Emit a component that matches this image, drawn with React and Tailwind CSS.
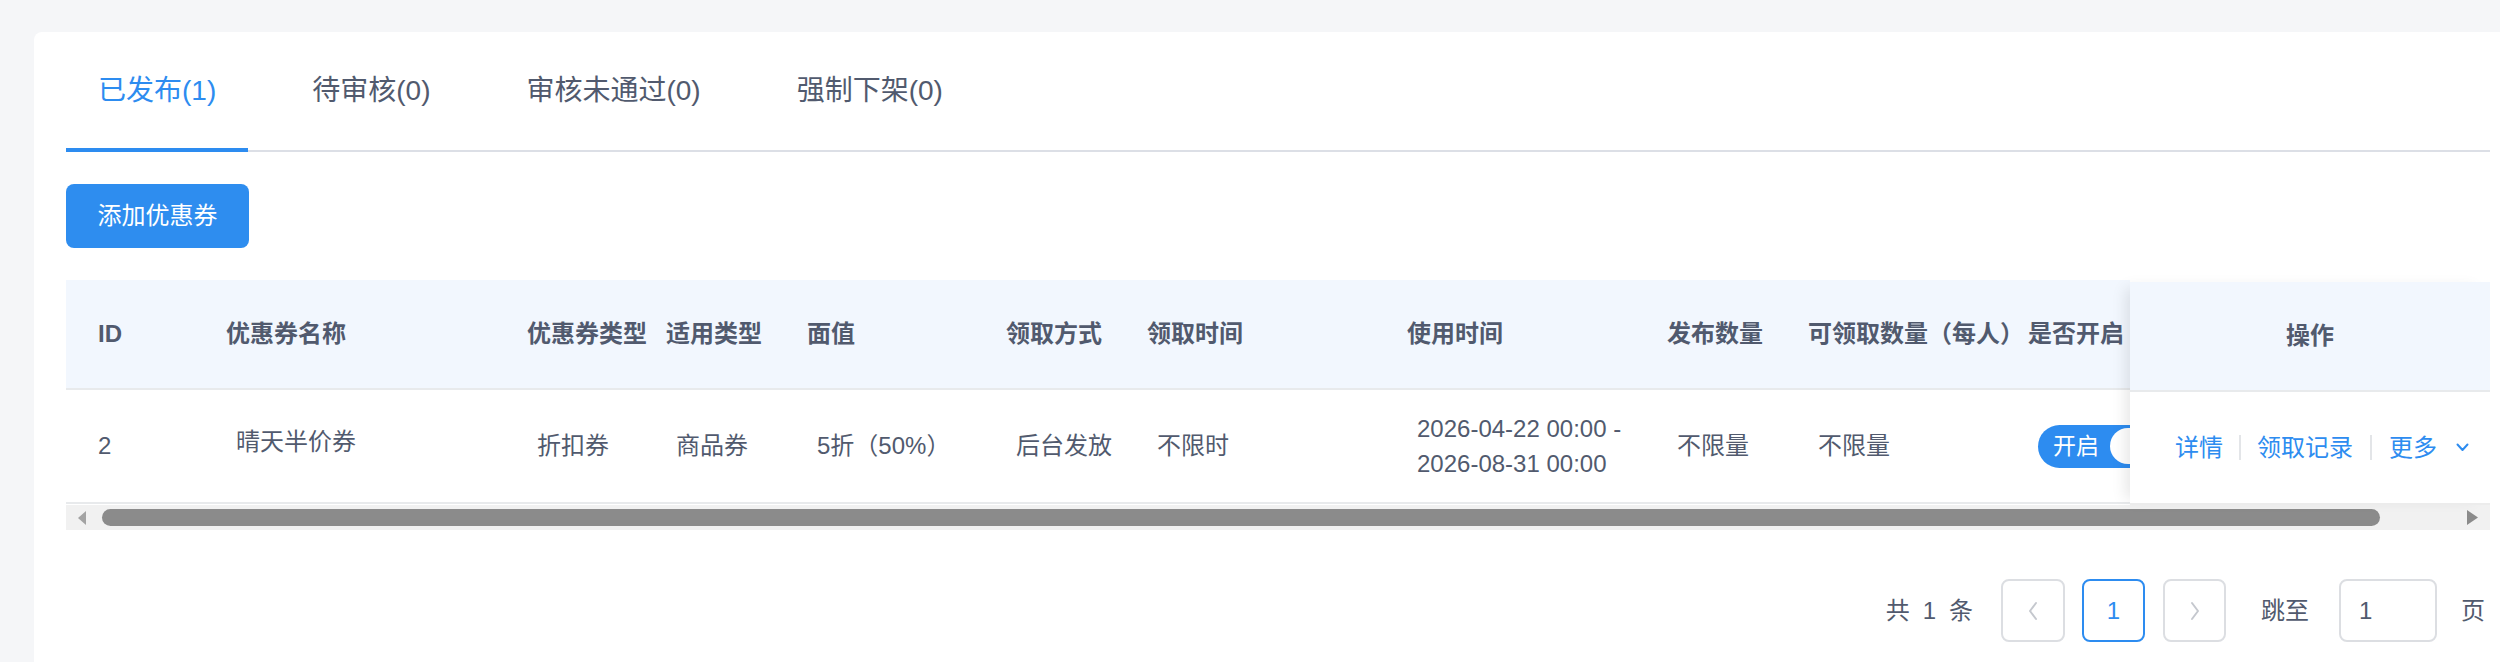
import React from "react";

const font = { fontFamily: '"Liberation Sans", "Noto Sans CJK SC", sans-serif' };

const tabs = [
  { label: "已发布(1)", active: true },
  { label: "待审核(0)" },
  { label: "审核未通过(0)" },
  { label: "强制下架(0)" },
];

// column widths measured from the header text positions
const columns = [
  { title: "ID", value: "2", w: "w-[128px]", first: true },
  { title: "优惠券名称", value: "晴天半价券", w: "w-[301px]", lift: true },
  { title: "优惠券类型", value: "折扣券", w: "w-[139px]" },
  { title: "适用类型", value: "商品券", w: "w-[141px]" },
  { title: "面值", value: "5折（50%）", w: "w-[199px]" },
  { title: "领取方式", value: "后台发放", w: "w-[141px]" },
  { title: "领取时间", value: "不限时", w: "w-[260px]" },
  { title: "使用时间", value: "date", w: "w-[260px]" },
  { title: "发布数量", value: "不限量", w: "w-[141px]" },
  { title: "可领取数量（每人）", value: "不限量", w: "w-[220px]" },
  { title: "是否开启", value: "switch", w: "w-[200px]" },
];

function Chevron({ dir }) {
  return (
    <svg width="12" height="22" viewBox="0 0 12 22" fill="none">
      <path
        d={dir === "left" ? "M9 3L3 11L9 19" : "M3 3L9 11L3 19"}
        stroke="#c5c8ce"
        strokeWidth="2"
        strokeLinecap="round"
        strokeLinejoin="round"
      />
    </svg>
  );
}

function Cell({ col }) {
  if (col.value === "date") {
    return (
      <div className="pl-[10px] text-[24px] leading-[35px]">
        <div>2026-04-22 00:00 -</div>
        <div>2026-08-31 00:00</div>
      </div>
    );
  }
  if (col.value === "switch") {
    return (
      <div className="pl-[10px]">
        <div className="flex h-[43px] w-[112px] items-center rounded-full bg-[#2d8cf0] pl-[15px] pr-[4px]">
          <span className="text-[23px] leading-none text-white">开启</span>
          <span className="ml-auto h-[36px] w-[36px] rounded-full bg-white" />
        </div>
      </div>
    );
  }
  return (
    <div className={`${col.first ? "" : "pl-[10px]"} ${col.lift ? "pb-[8px]" : ""} text-[24px] leading-none`}>
      {col.value}
    </div>
  );
}

export default function App() {
  return (
    <div className="h-[662px] w-[2500px] overflow-hidden bg-[#f5f6f8] pl-[34px] pt-[32px] text-[#515a6e]" style={font}>
      <div className="min-h-[700px] w-[2488px] rounded-[8px] bg-white px-[32px]">
        {/* tabs */}
        <div className="flex gap-[32px] border-b-2 border-[#dcdfe6]">
          {tabs.map((t) => (
            <div
              key={t.label}
              className={`relative flex h-[118px] items-center px-[32px] text-[28px] ${t.active ? "text-[#2d8cf0]" : "text-[#515a6e]"}`}
            >
              {t.label}
              {t.active && <span className="absolute -bottom-[2px] left-0 right-0 h-[4px] bg-[#2d8cf0]" />}
            </div>
          ))}
        </div>

        <button className="mt-[32px] flex h-[64px] w-[183px] items-center justify-center rounded-[8px] bg-[#2e8def] text-[24px] text-white">
          添加优惠券
        </button>

        {/* table */}
        <div className="mt-[32px]">
          <div className="flex">
            <div className="w-[2064px] overflow-hidden">
              <div className="flex h-[110px] border-b-2 border-[#e8eaec] bg-[#f2f7fe] pl-[32px]">
                {columns.map((c) => (
                  <div key={c.title} className={`${c.w} flex shrink-0 items-center whitespace-nowrap text-[24px] font-bold`}>
                    {c.title}
                  </div>
                ))}
              </div>
              <div className="flex h-[114px] border-b-2 border-[#e8eaec] pl-[32px]">
                {columns.map((c) => (
                  <div key={c.title} className={`${c.w} flex shrink-0 items-center whitespace-nowrap`}>
                    <Cell col={c} />
                  </div>
                ))}
              </div>
            </div>
            <div className="relative z-10 mt-[2px] w-[360px] bg-white shadow-[-10px_0_14px_-6px_rgba(0,0,0,0.10)]">
              <div className="flex h-[110px] items-center justify-center border-b-2 border-[#e8eaec] bg-[#f2f7fe] text-[24px] font-bold">
                操作
              </div>
              <div className="flex h-[113px] items-center justify-center border-b-2 border-[#ececec] pl-[24px] text-[24px] text-[#2d8cf0]">
                <span>详情</span>
                <span className="mx-[16px] h-[25px] w-[2px] bg-[#e3e5e8]" />
                <span>领取记录</span>
                <span className="mx-[17px] h-[25px] w-[2px] bg-[#e3e5e8]" />
                <span>更多</span>
                <svg className="ml-[19px]" width="13" height="9" viewBox="0 0 13 9" fill="none">
                  <path d="M1.5 1.5L6.5 7L11.5 1.5" stroke="#2d8cf0" strokeWidth="2" strokeLinecap="round" strokeLinejoin="round" />
                </svg>
              </div>
            </div>
          </div>

          {/* horizontal scrollbar */}
          <div className="flex h-[25px] items-center bg-[#f1f1f1] px-[12px]">
            <svg width="8" height="14" viewBox="0 0 8 14">
              <path d="M8 0L0 7L8 14Z" fill="#a3a3a3" />
            </svg>
            <div className="ml-[16px] h-[17px] w-[2278px] rounded-full bg-[#8b8b8b]" />
            <svg className="ml-auto" width="11" height="15" viewBox="0 0 11 15">
              <path d="M0 0L11 7.5L0 15Z" fill="#8b8b8b" />
            </svg>
          </div>
        </div>

        {/* pagination */}
        <div className="mt-[49px] flex h-[63px] items-center justify-end pr-[5px] text-[24px]">
          <span>共</span>
          <span className="mx-[13px]">1</span>
          <span>条</span>
          <div className="ml-[28px] flex h-[63px] w-[64px] items-center justify-center rounded-[8px] border-2 border-[#dcdee2]">
            <Chevron dir="left" />
          </div>
          <div className="ml-[17px] flex h-[63px] w-[63px] items-center justify-center rounded-[8px] border-2 border-[#2d8cf0] text-[#2d8cf0]">
            1
          </div>
          <div className="ml-[18px] flex h-[63px] w-[63px] items-center justify-center rounded-[8px] border-2 border-[#dcdee2]">
            <Chevron dir="right" />
          </div>
          <span className="ml-[35px]">跳至</span>
          <div className="ml-[30px] flex h-[63px] w-[98px] items-center rounded-[8px] border-2 border-[#dcdee2] pl-[18px]">
            1
          </div>
          <span className="ml-[24px]">页</span>
        </div>
      </div>
    </div>
  );
}
